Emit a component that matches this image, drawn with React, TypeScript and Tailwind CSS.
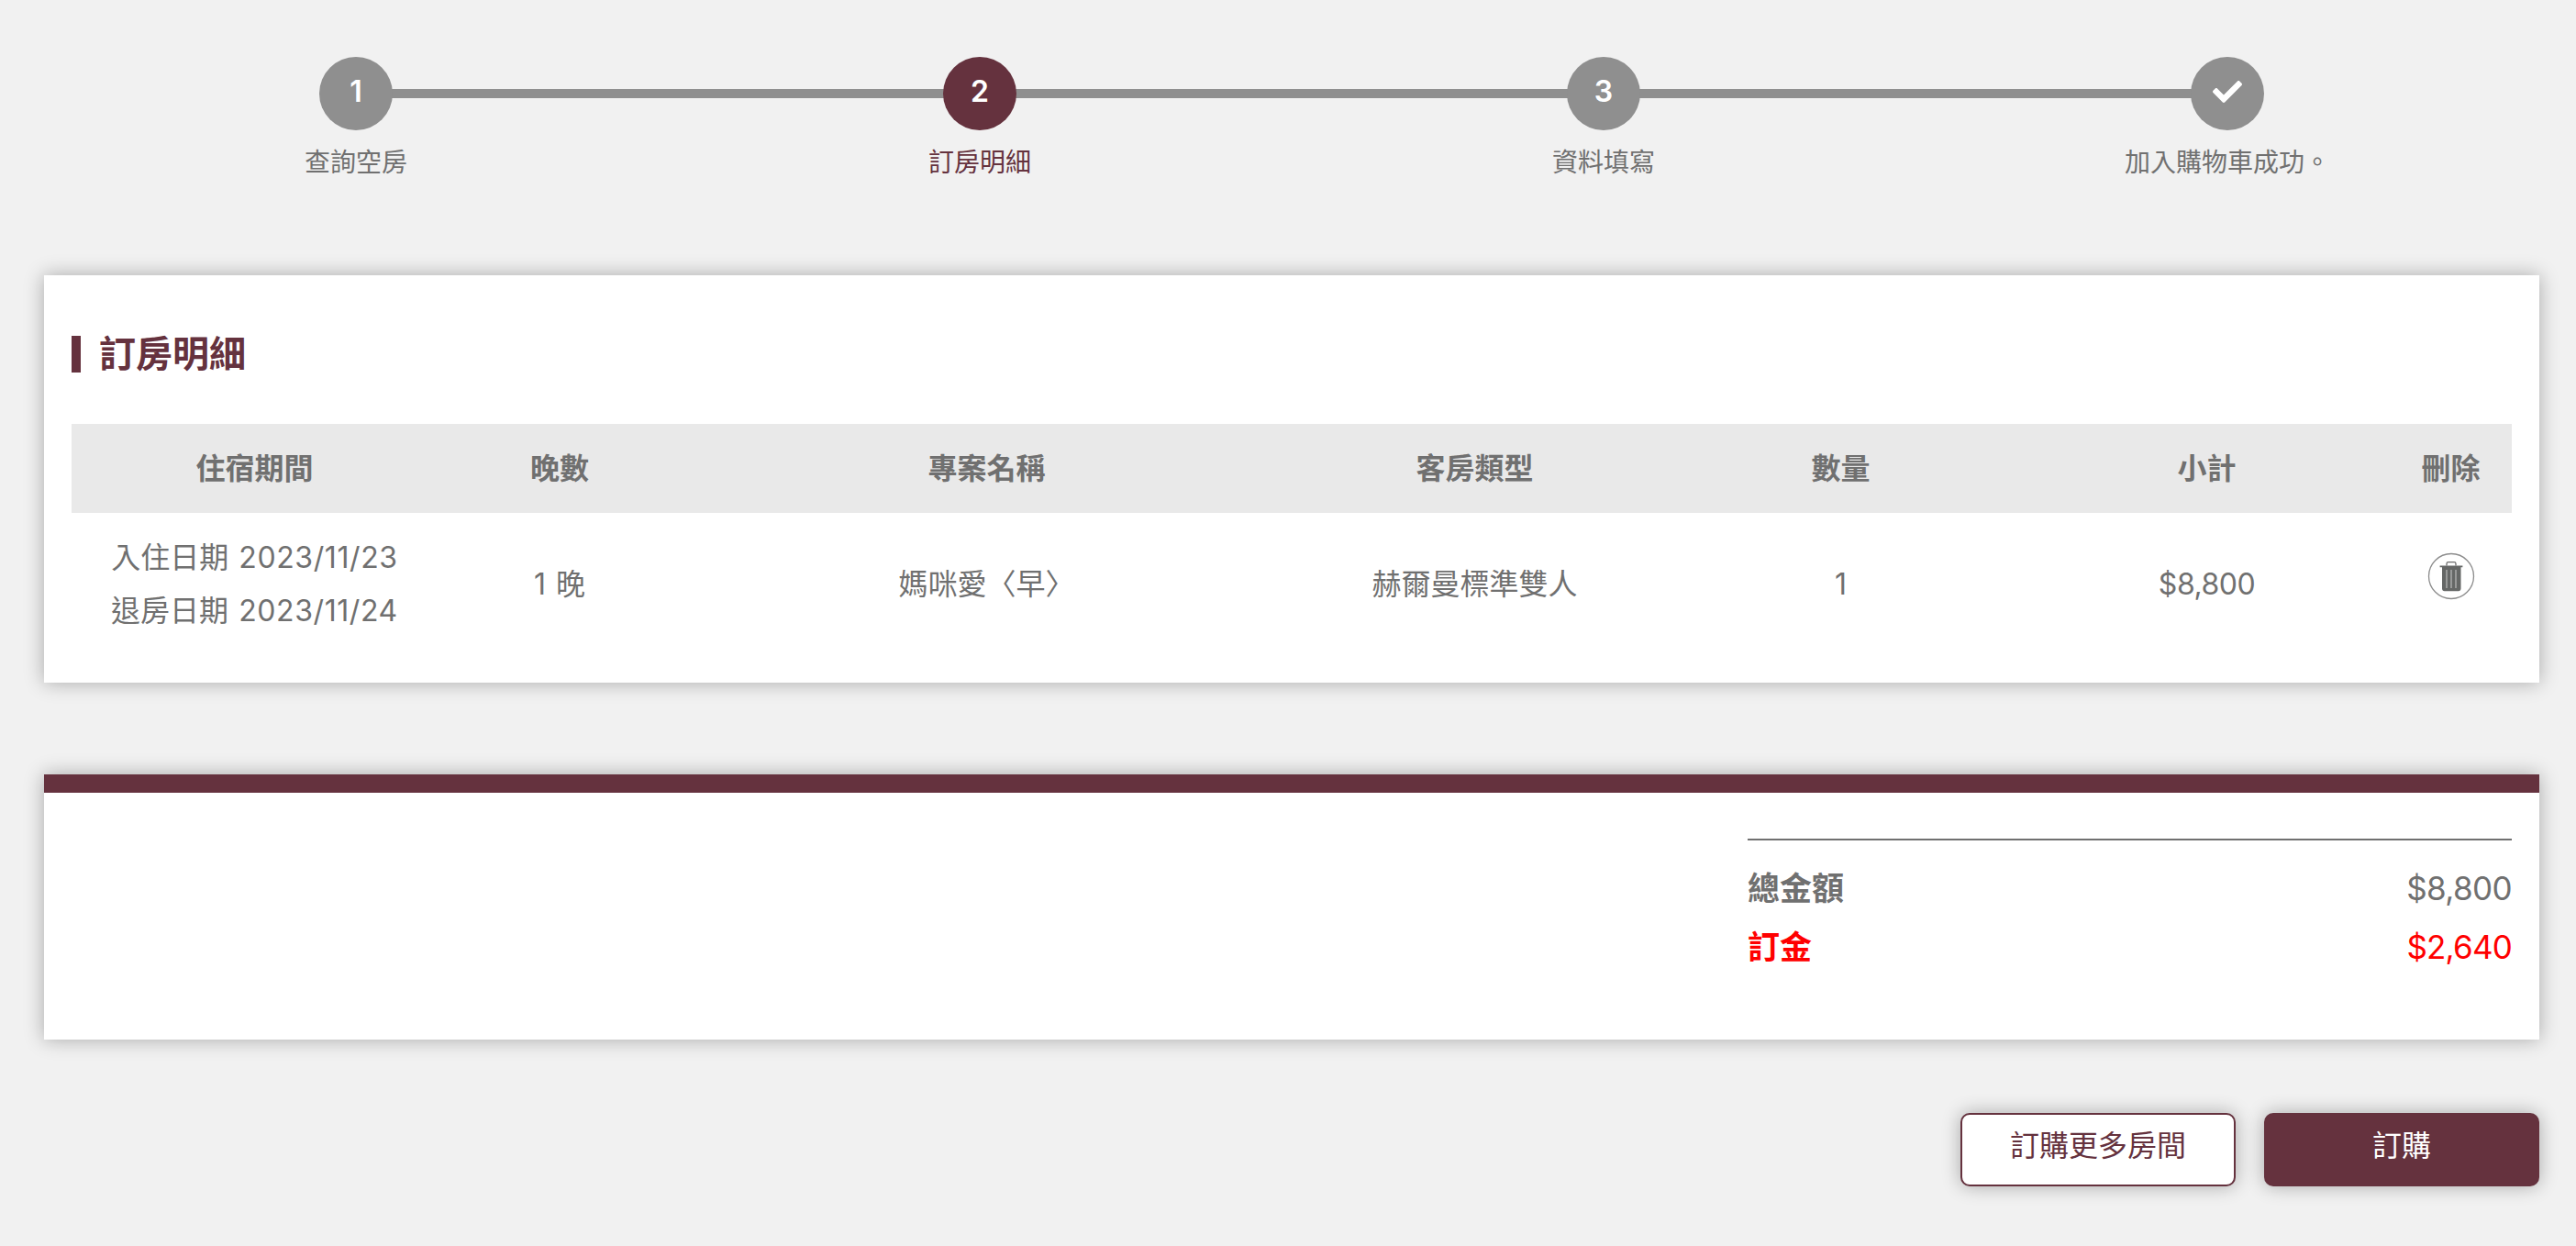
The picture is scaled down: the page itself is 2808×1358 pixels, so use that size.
import type { ReactNode } from "react";

type Step = {
  mark: ReactNode;
  label: string;
  active?: boolean;
};

const steps: Step[] = [
  { mark: "1", label: "查詢空房" },
  { mark: "2", label: "訂房明細", active: true },
  { mark: "3", label: "資料填寫" },
  { mark: <CheckIcon />, label: "加入購物車成功。" },
];

const columns = [
  "住宿期間",
  "晚數",
  "專案名稱",
  "客房類型",
  "數量",
  "小計",
  "刪除",
];

function CheckIcon() {
  return (
    <svg viewBox="0 0 512 512" className="h-8 w-8" fill="currentColor">
      <path d="M173.898 439.404l-166.4-166.4c-9.997-9.997-9.997-26.206 0-36.204l36.203-36.204c9.997-9.998 26.207-9.998 36.204 0L192 312.69 432.095 72.596c9.997-9.997 26.207-9.997 36.204 0l36.203 36.204c9.997 9.997 9.997 26.206 0 36.204l-294.4 294.401c-9.998 9.997-26.207 9.997-36.204-.001z" />
    </svg>
  );
}

function TrashIcon() {
  return (
    <svg viewBox="0 0 52 52" className="h-[52px] w-[52px]" fill="none">
      <circle cx="26" cy="26" r="24.5" stroke="#8c8c8c" strokeWidth="1.3" />
      <path d="M21 14.6v-2.2c0-1 .8-1.8 1.8-1.8h6.4c1 0 1.8.8 1.8 1.8v2.2" stroke="#6b6b6b" strokeWidth="1.3" />
      <path d="M13.6 14.6h24.8v1.6h-1.9v23.4c0 1.6-1 2.6-2.6 2.6H18.6c-1.6 0-2.6-1-2.6-2.6V16.2h-2.4z" fill="#656766" />
      <path d="M21 19v20M26 19v20M31 19v20" stroke="#c4c4c4" strokeWidth="1.1" />
    </svg>
  );
}

export default function App() {
  return (
    <main className="h-[1358px] w-[2808px] overflow-hidden bg-[#f1f1f1] pl-12 pr-10 pt-[62px] font-['Inter','Noto_Sans_CJK_TC',sans-serif] text-[32px] text-[#707070]">
      {/* ================= STEPS ================= */}

      <ol className="grid h-[238px] grid-cols-4">
        {steps.map((step, index) => (
          <li
            key={step.label}
            className={`relative flex flex-col items-center ${step.active ? "text-[#65323e]" : ""}`}
          >
            {index < steps.length - 1 && (
              <span className="absolute left-1/2 top-[35px] h-[10px] w-full bg-[#8f8f8f]" />
            )}
            <span
              className={`relative z-10 flex h-20 w-20 items-center justify-center rounded-full pb-1 font-semibold leading-none text-white ${step.active ? "bg-[#65323e]" : "bg-[#8f8f8f]"}`}
            >
              {step.mark}
            </span>
            <span className="mt-[14px] text-[28px] leading-[42px]">
              {step.label}
            </span>
          </li>
        ))}
      </ol>

      {/* ================= BOOKING DETAIL ================= */}

      <section className="h-[444px] bg-white px-[30px] pt-[66px] shadow-[0_0_20px_rgba(0,0,0,0.3)]">
        <h2 className="flex h-10 items-center gap-5 text-[40px] font-bold leading-none text-[#65323e]">
          <span className="h-10 w-[10px] bg-[#65323e]" />
          訂房明細
        </h2>

        <table className="mt-14 w-full table-fixed text-center">
          <colgroup>
            <col className="w-[15%]" />
            <col className="w-[10%]" />
            <col className="w-[25%]" />
            <col className="w-[15%]" />
            <col className="w-[15%]" />
            <col className="w-[15%]" />
            <col className="w-[5%]" />
          </colgroup>
          <thead>
            <tr className="h-[97px] bg-[#e9e9e9]">
              {columns.map((column) => (
                <th key={column} className="p-0 font-bold leading-[58px]">
                  {column}
                </th>
              ))}
            </tr>
          </thead>
          <tbody>
            <tr className="h-[155px] leading-[58px] [word-spacing:2px]">
              <td>
                入住日期 <span className="tracking-[0.6px]">2023/11/23</span>
                <br />
                退房日期 <span className="tracking-[0.6px]">2023/11/24</span>
              </td>
              <td>1 晚</td>
              <td>媽咪愛〈早〉</td>
              <td>赫爾曼標準雙人</td>
              <td>1</td>
              <td className="tracking-[-0.5px]">$8,800</td>
              <td>
                <button className="mb-[17px] block w-full" aria-label="刪除">
                  <span className="flex justify-center">
                    <TrashIcon />
                  </span>
                </button>
              </td>
            </tr>
          </tbody>
        </table>
      </section>

      {/* ================= TOTAL ================= */}

      <section className="mt-[100px] flex h-[289px] justify-end border-t-[20px] border-[#65323e] bg-white px-[30px] pt-[50px] shadow-[0_0_20px_rgba(0,0,0,0.3)]">
        <dl className="w-[833px] border-t-2 border-[#707070] pt-5 text-[35px] leading-[64px]">
          <div className="flex justify-between">
            <dt className="font-bold">總金額</dt>
            <dd className="tracking-[-0.6px]">$8,800</dd>
          </div>
          <div className="flex justify-between text-[#ff0000]">
            <dt className="font-bold">訂金</dt>
            <dd className="tracking-[-0.8px]">$2,640</dd>
          </div>
        </dl>
      </section>

      {/* ================= BUTTONS ================= */}

      <div className="mt-20 flex justify-end gap-[31px]">
        <button className="h-20 w-[300px] rounded-[10px] border-2 border-[#65323e] bg-white pb-2 text-[#65323e] shadow-[0_0_20px_rgba(0,0,0,0.3)]">
          訂購更多房間
        </button>
        <button className="h-20 w-[300px] rounded-[10px] border-2 border-[#65323e] bg-[#65323e] pb-2 text-white shadow-[0_0_20px_rgba(0,0,0,0.3)]">
          訂購
        </button>
      </div>
    </main>
  );
}
